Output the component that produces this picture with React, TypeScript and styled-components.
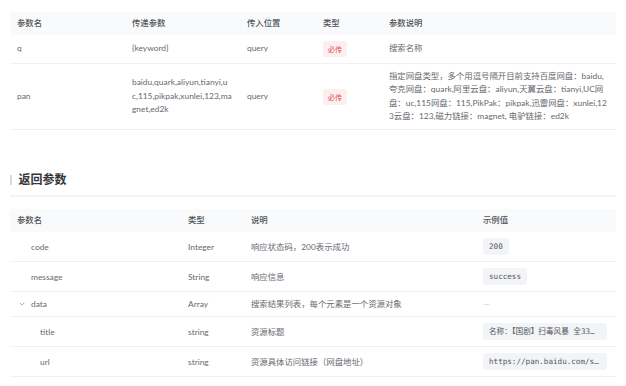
import { FC } from 'react';
import styled, { createGlobalStyle } from 'styled-components';

const GlobalStyle = createGlobalStyle({
  body: {
    margin: 0,
    background: '#ffffff',
    fontFamily: '"Lato", "Noto Sans CJK SC", sans-serif',
    color: '#666a70',
  },
});

const Page = styled.div({
  padding: '12px 10px 0',
  width: 606,
});

const Table = styled.table({
  width: '100%',
  borderCollapse: 'collapse',
  tableLayout: 'fixed',
  fontSize: 8.4,
});

const HeadCell = styled.th<{ $w?: number }>(({ $w }) => ({
  width: $w,
  boxSizing: 'border-box',
  textAlign: 'left',
  fontWeight: 500,
  color: '#50545a',
  background: '#f9fafb',
  padding: '5px 7px',
  lineHeight: '13px',
}));

const Row = styled.tr({
  borderBottom: '1px solid #f0f1f3',
});

const Cell = styled.td<{ $pad?: number; $indent?: number; $right?: number }>(
  ({ $pad = 6, $indent = 0, $right = 7 }) => ({
    padding: `${$pad}px ${$right}px ${$pad}px ${7 + $indent}px`,
    lineHeight: '13.6px',
    verticalAlign: 'middle',
    wordBreak: 'break-all',
    color: '#666a70',
  })
);

const ReturnCell = styled(Cell)({
  lineHeight: '12px',
});

const Required = styled.span({
  display: 'inline-block',
  height: 16,
  lineHeight: '16px',
  padding: '0 5px',
  borderRadius: 3,
  background: '#fdeef0',
  color: '#e5484d',
  fontSize: 7,
  verticalAlign: 'middle',
});

const SectionTitle = styled.div({
  marginTop: 41,
  paddingBottom: 6,
  borderBottom: '2px solid #f2f3f5',
  display: 'flex',
  alignItems: 'center',
  gap: 7,
});

const TitleBar = styled.span({
  width: 1.5,
  height: 10,
  background: '#d8dbe0',
});

const TitleText = styled.h2({
  margin: 0,
  fontSize: 12,
  lineHeight: '18px',
  fontWeight: 600,
  color: '#33363a',
});

const ReturnTable = styled(Table)({
  marginTop: 12,
});

const Chip = styled.span({
  display: 'inline-block',
  maxWidth: 124,
  height: 17,
  lineHeight: '17px',
  padding: '0 6px',
  boxSizing: 'border-box',
  borderRadius: 3,
  background: '#f2f4f7',
  fontFamily: '"DejaVu Sans Mono", "Noto Sans CJK SC", monospace',
  fontSize: 7.6,
  color: '#55595f',
  whiteSpace: 'nowrap',
  overflow: 'hidden',
  textOverflow: 'ellipsis',
  verticalAlign: 'middle',
});

const Empty = styled.span({
  color: '#c8cbd0',
});

const NameWrap = styled.span({
  display: 'inline-flex',
  alignItems: 'center',
  gap: 6,
});

const Chevron: FC = () => (
  <svg width="6" height="6" viewBox="0 0 6 6" fill="none">
    <path d="M0.8 1.8 L3 4.1 L5.2 1.8" stroke="#9a9ea4" strokeWidth="0.8" />
  </svg>
);

type ReturnField = {
  name: string;
  type: string;
  desc: string;
  example?: string;
  indent: number;
  expandable?: boolean;
};

const fields: ReturnField[] = [
  { name: 'code', type: 'Integer', desc: '响应状态码，200表示成功', example: '200', indent: 14 },
  { name: 'message', type: 'String', desc: '响应信息', example: 'success', indent: 14 },
  { name: 'data', type: 'Array', desc: '搜索结果列表，每个元素是一个资源对象', indent: 2, expandable: true },
  { name: 'title', type: 'string', desc: '资源标题', example: '名称：【国剧】扫毒风暴 全33集 国语中字', indent: 23 },
  { name: 'url', type: 'string', desc: '资源具体访问链接（网盘地址）', example: 'https://pan.baidu.com/s/1abcdEFG', indent: 23 },
];

const App: FC = () => (
  <>
    <GlobalStyle />
    <Page>
      <Table>
        <thead>
          <tr>
            <HeadCell $w={115}>参数名</HeadCell>
            <HeadCell $w={115}>传递参数</HeadCell>
            <HeadCell $w={76}>传入位置</HeadCell>
            <HeadCell $w={66}>类型</HeadCell>
            <HeadCell>参数说明</HeadCell>
          </tr>
        </thead>
        <tbody>
          <Row>
            <Cell>q</Cell>
            <Cell>{'{keyword}'}</Cell>
            <Cell>query</Cell>
            <Cell>
              <Required>必传</Required>
            </Cell>
            <Cell>搜索名称</Cell>
          </Row>
          <Row>
            <Cell $pad={5.5}>pan</Cell>
            <Cell $pad={5.5}>baidu,quark,aliyun,tianyi,uc,115,pikpak,xunlei,123,magnet,ed2k</Cell>
            <Cell $pad={5.5}>query</Cell>
            <Cell $pad={5.5}>
              <Required>必传</Required>
            </Cell>
            <Cell $pad={5.5} $right={5}>
              指定网盘类型，多个用逗号隔开目前支持百度网盘：baidu,夸克网盘：quark,阿里云盘：aliyun,天翼云盘：tianyi,UC网盘：uc,115网盘：115,PikPak：pikpak,迅雷网盘：xunlei,123云盘：123,磁力链接：magnet,
              电驴链接：ed2k
            </Cell>
          </Row>
        </tbody>
      </Table>

      <SectionTitle>
        <TitleBar />
        <TitleText>返回参数</TitleText>
      </SectionTitle>

      <ReturnTable>
        <thead>
          <tr>
            <HeadCell $w={171}>参数名</HeadCell>
            <HeadCell $w={63}>类型</HeadCell>
            <HeadCell $w={232}>说明</HeadCell>
            <HeadCell>示例值</HeadCell>
          </tr>
        </thead>
        <tbody>
          {fields.map(field => (
            <Row key={field.name}>
              <ReturnCell $indent={field.indent}>
                {field.expandable ? (
                  <NameWrap>
                    <Chevron />
                    {field.name}
                  </NameWrap>
                ) : (
                  field.name
                )}
              </ReturnCell>
              <ReturnCell>{field.type}</ReturnCell>
              <ReturnCell>{field.desc}</ReturnCell>
              <ReturnCell>
                {field.example ? <Chip>{field.example}</Chip> : <Empty>—</Empty>}
              </ReturnCell>
            </Row>
          ))}
        </tbody>
      </ReturnTable>
    </Page>
  </>
);

export default App;
